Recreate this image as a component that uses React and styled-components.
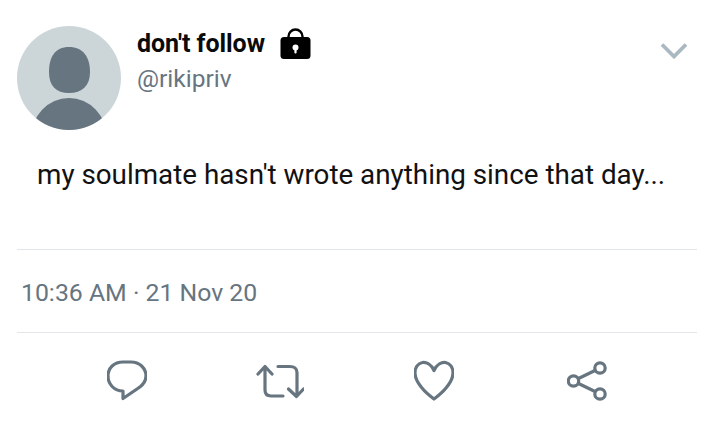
import React from 'react';
import styled, { createGlobalStyle } from 'styled-components';

const Global = createGlobalStyle`
  html, body { margin: 0; padding: 0; background: #fff; }
  body { font-family: Roboto, "Liberation Sans", sans-serif; overflow: hidden; }
`;

const Tweet = styled.div`
  width: 713px;
  height: 422px;
  box-sizing: border-box;
  padding: 26px 16px 0 17px;
  display: flex;
  flex-direction: column;
  background: #fff;
`;

const Header = styled.div`
  display: flex;
  align-items: flex-start;
  height: 104px;
  flex: none;
`;

const AvatarSvg = styled.svg`
  width: 104px;
  height: 104px;
  flex: none;
`;

const Names = styled.div`
  margin-left: 16px;
  display: flex;
  flex-direction: column;
  flex: 1;
  padding-top: 2px;
`;

const NameRow = styled.div`
  display: flex;
  align-items: center;
  gap: 15px;
  height: 32px;
`;

const Name = styled.span`
  font-size: 25px;
  font-weight: 700;
  color: #0a0a0a;
  letter-spacing: -0.05px;
  position: relative;
  top: -1px;
`;

const Handle = styled.span`
  font-size: 24.5px;
  color: #66757f;
  line-height: 30px;
  margin-top: 4px;
`;

const Chevron = styled.svg`
  width: 28px;
  height: 17px;
  margin: 16px 9px 0 0;
  flex: none;
`;

const Body = styled.p`
  margin: 27px 0 0 20px;
  font-size: 27.8px;
  line-height: 36px;
  color: #111;
  white-space: nowrap;
  flex: none;
`;

const Divider = styled.div`
  height: 1px;
  background: #e3e6e8;
  flex: none;
`;

const Rule = styled(Divider)`
  margin-top: 56px;
`;

const Time = styled.div`
  height: 82px;
  box-sizing: border-box;
  display: flex;
  align-items: center;
  flex: none;
  padding: 2px 0 0 4px;
  font-size: 24.8px;
  color: #66757f;
`;

const Actions = styled.div`
  display: flex;
  align-items: flex-start;
  height: 89px;
  box-sizing: border-box;
  flex: none;
  padding: 26px 0 0 90px;
`;

const ActionIcon = styled.svg`
  flex: none;
  width: ${p => p.$w}px;
  height: 44px;
  margin-right: ${p => p.$gap}px;
  fill: none;
  stroke: #66757f;
  stroke-width: 3.2;
  stroke-linecap: round;
  stroke-linejoin: round;
`;

const LockIcon = styled.svg`
  width: 31px;
  height: 32px;
  flex: none;
`;

const Lock = () => (
  <LockIcon viewBox="0 0 31 32">
    <path d="M8.500 11V8.500a7 7 0 0 1 14 0V11" fill="none" stroke="#000" strokeWidth="2.4" />
    <rect x="0.500" y="9" width="30" height="22" rx="3.500" fill="#000" />
    <circle cx="15.500" cy="19.500" r="3" fill="#fff" />
    <rect x="14.400" y="20" width="2.200" height="5.500" rx="1" fill="#fff" />
  </LockIcon>
);

export default function App() {
  return (
    <Tweet>
      <Global />
      <Header>
        <AvatarSvg viewBox="0 0 104 104">
          <defs>
            <clipPath id="av"><circle cx="52" cy="52" r="52" /></clipPath>
          </defs>
          <circle cx="52" cy="52" r="52" fill="#ccd6d9" />
          <g clipPath="url(#av)" fill="#66757f">
            <path d="M52 21C66 21 73 31 73 46C73 60 65 67 52 67C39 67 32 60 32 46C32 31 38 21 52 21z" />
            <ellipse cx="52" cy="112" rx="38" ry="40" />
          </g>
        </AvatarSvg>
        <Names>
          <NameRow>
            <Name>don't follow</Name>
            <Lock />
          </NameRow>
          <Handle>@rikipriv</Handle>
        </Names>
        <Chevron viewBox="0 0 28 17">
          <path d="M2 2.500l12 12 12-12" fill="none" stroke="#aab8c2" strokeWidth="3.800" />
        </Chevron>
      </Header>
      <Body>my soulmate hasn't wrote anything since that day...</Body>
      <Rule />
      <Time>10:36 AM · 21 Nov 20</Time>
      <Divider />
      <Actions>
        <ActionIcon $w={40} $gap={109} viewBox="0 0 40 44">
          <path d="M16 3h8c8.500 0 15 6 15 14 0 6-4 10-9 13l-14 9.500V32C7 32 1 25 1 17 1 9 7 3 16 3z" />
        </ActionIcon>
        <ActionIcon $w={48} $gap={110} viewBox="0 0 48 44">
          <path d="M2 15l7-7.500 7 7.500M9 8v23c0 4 2 6 6 6h12M22 7.500h12c4 0 7 2 7 6V37M32.500 30l8 7.500 7-7.500" />
        </ActionIcon>
        <ActionIcon $w={40} $gap={113} viewBox="0 0 40 44">
          <path d="M20 11.500C17 5 12 3 8.500 3.500 4 4.500 1 8.500 1 14c0 5 2 9 7 15 4 5 8 8 12 11 4-3 8-6 12-11 5-6 7-10 7-15 0-5.500-3-9.500-7.500-10.500C28 3 23 5 20 11.500z" />
        </ActionIcon>
        <ActionIcon $w={40} $gap={0} viewBox="0 0 40 44">
          <circle cx="6.500" cy="22" r="5.200" />
          <circle cx="33" cy="9" r="5.200" />
          <circle cx="33" cy="35" r="5.200" />
          <path d="M11.500 19.500L28 11.500M11.500 24.500L28 32.500" />
        </ActionIcon>
      </Actions>
    </Tweet>
  );
}
